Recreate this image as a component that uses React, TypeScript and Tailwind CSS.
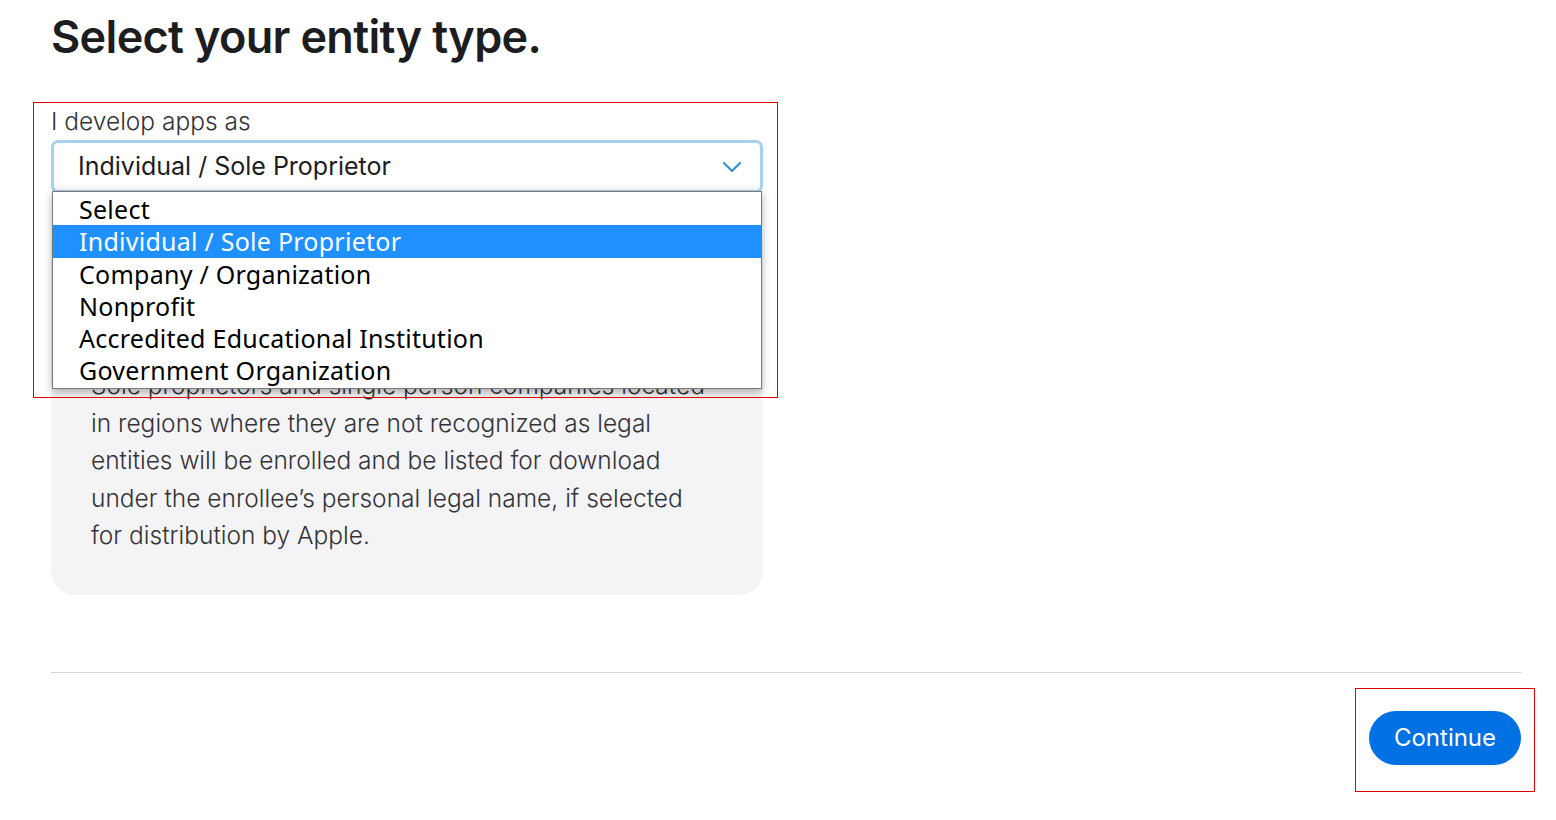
import { ChevronDown } from 'lucide-react'

const options = [
  'Select',
  'Individual / Sole Proprietor',
  'Company / Organization',
  'Nonprofit',
  'Accredited Educational Institution',
  'Government Organization',
]

export default function App() {
  const selected = 'Individual / Sole Proprietor'

  return (
    <div className="relative min-h-screen bg-white font-['Inter',_'Liberation_Sans',_sans-serif] text-[#1d1d1f]">
      <div className="pl-[51px] pr-[35px] pt-[9px]">
        {/* Title */}
        <h1 className="text-[45px] font-semibold leading-[56px] tracking-[-0.015em] text-[#1d1d1f]">
          Select your entity type.
        </h1>

        {/* Entity select */}
        <div className="mt-[40px] w-[712px]">
          <label className="block text-[24.5px] font-light leading-[32px] text-[#333336]">
            I develop apps as
          </label>
          <div className="relative mt-[3px]">
            <div className="flex h-[53px] items-center justify-between rounded-[7px] border-[3px] border-[#a6d2ee] bg-white pl-[24px] pr-[12px] shadow-[inset_0_-4px_6px_rgba(0,0,0,0.04)]">
              <span className="text-[25px] leading-none text-[#1d1d1f]">{selected}</span>
              <ChevronDown className="h-[32px] w-[32px] text-[#2f93d4]" strokeWidth={1.6} />
            </div>

            {/* Native-looking dropdown list */}
            <ul className="absolute left-[1px] top-[51px] z-10 w-[710px] border border-[#7a7a7a] bg-white py-[1px] shadow-[0_3px_8px_rgba(0,0,0,0.3)] font-['Noto_Sans',_'Inter',_sans-serif]">
              {options.map((opt) => (
                <li
                  key={opt}
                  className={
                    opt === selected
                      ? 'h-[32.3px] bg-[#1e90ff] pl-[26px] text-[25px] leading-[32px] tracking-[0.01em] text-white'
                      : 'h-[32.3px] pl-[26px] text-[25px] leading-[32px] tracking-[0.01em] text-black'
                  }
                >
                  {opt}
                </li>
              ))}
            </ul>
          </div>

          {/* Description card */}
          <div className="mt-[24px] rounded-[24px] bg-[#f4f4f6] px-[40px] pb-[40px] pt-[150px]">
            <p className="text-[24.5px] font-light leading-[37.5px] text-[#333336]">
              Sole proprietors and single person companies located
              <br />
              in regions where they are not recognized as legal
              <br />
              entities will be enrolled and be listed for download
              <br />
              under the enrollee’s personal legal name, if selected
              <br />
              for distribution by Apple.
            </p>
          </div>
        </div>

        {/* Footer */}
        <div className="mt-[77px] border-t border-[#d2d2d7]" />
        <div className="flex justify-end pt-[38px]">
          <button className="h-[54px] w-[152px] rounded-full bg-[#0071e3] text-[24px] font-normal text-white">
            Continue
          </button>
        </div>
      </div>

      {/* Annotation frames */}
      <div className="pointer-events-none absolute left-[33px] top-[102px] h-[296px] w-[745px] border border-[#e00000]" />
      <div className="pointer-events-none absolute left-[1355px] top-[688px] h-[104px] w-[180px] border border-[#e00000]" />
    </div>
  )
}
